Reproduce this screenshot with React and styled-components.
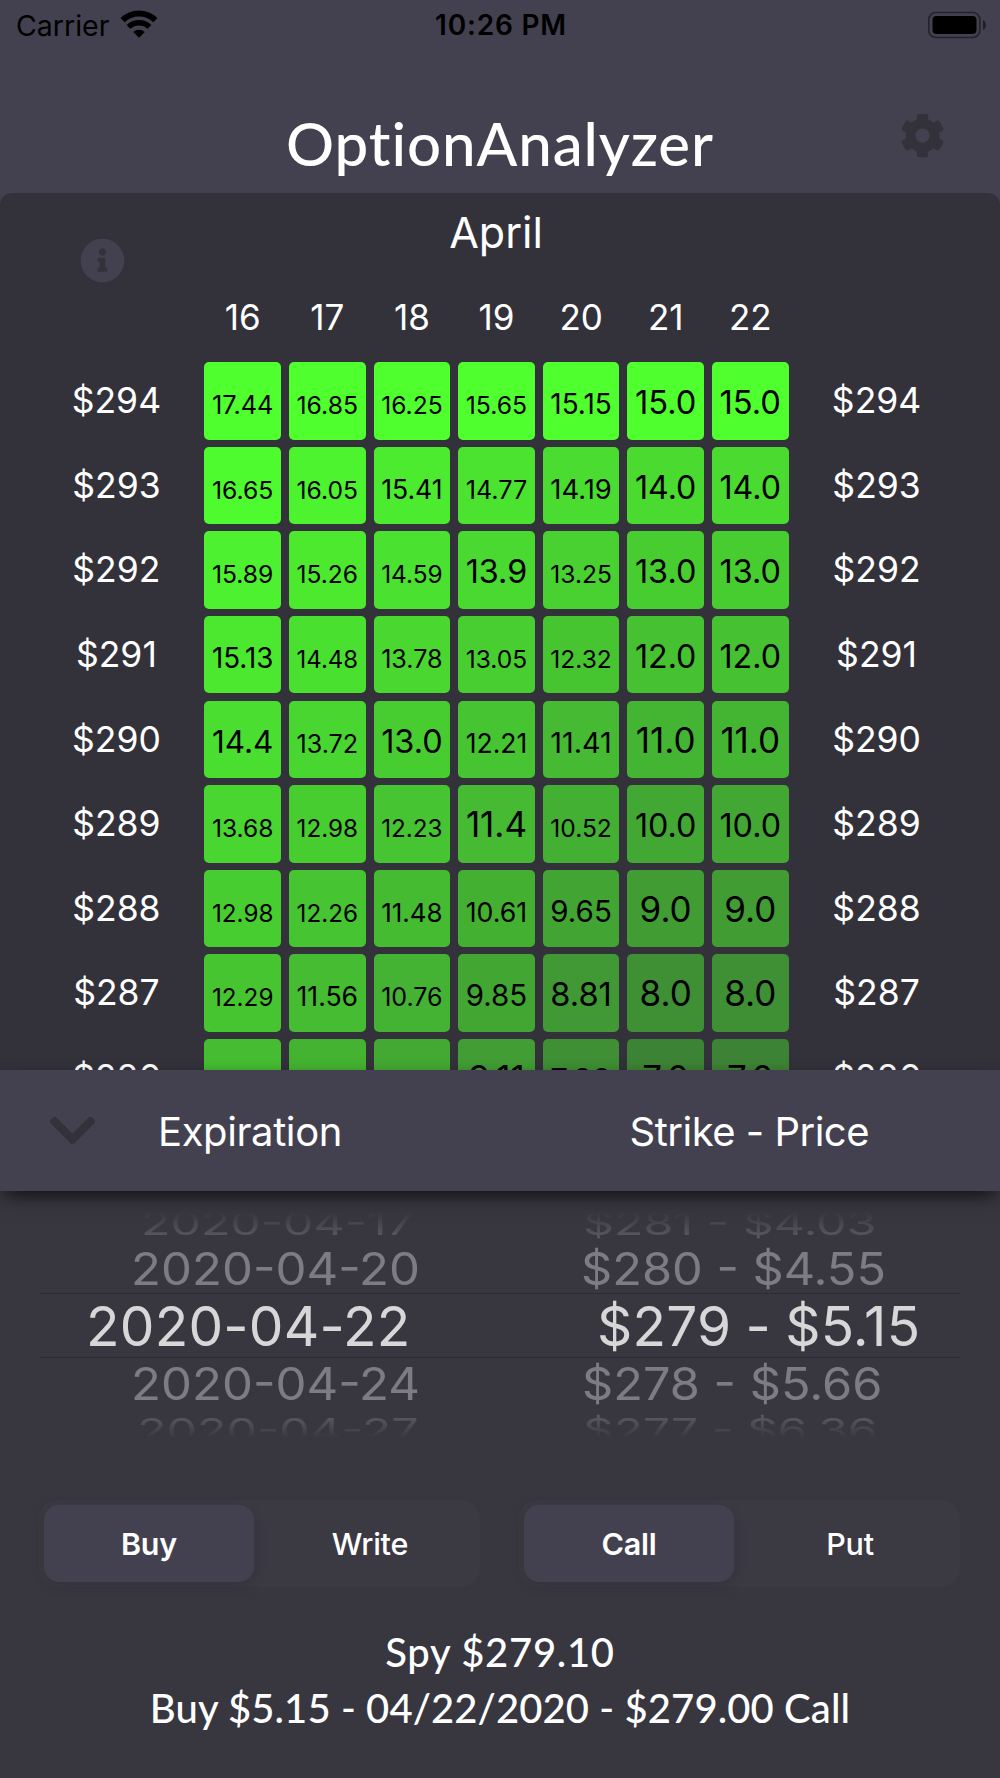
import React, { useState } from "react";
import styled, { createGlobalStyle } from "styled-components";
import { FaCog, FaInfoCircle, FaChevronDown } from "react-icons/fa";

// BEGIN STYLING

const GlobalStyle = createGlobalStyle`
  body {
    margin: 0;
    background: #38373f;
  }
  * {
    box-sizing: border-box;
  }
`
const SCScreen = styled.div`
  display: flex;
  flex-direction: column;
  width: 1000px;
  height: 1778px;
  overflow: hidden;
  background: #43414f;
  color: #fff;
  font-family: Inter, "Liberation Sans", sans-serif;
  white-space: nowrap;
`
const SCStatusBar = styled.div`
  display: grid;
  grid-template-columns: 1fr auto 1fr;
  align-items: center;
  height: 50px;
  padding: 0 14px 0 16px;
  color: #000;
  font-size: 28.5px;
`
const SCCarrier = styled.div`
  display: flex;
  align-items: center;
  gap: 11px;

  svg {
    margin-top: -3px;
  }
`
const SCClock = styled.div`
  font-size: 28px;
  font-weight: 600;
  letter-spacing: 0.8px;
`
const SCBattery = styled.svg`
  justify-self: end;
  margin-top: -1px;
`
const SCHeader = styled.header`
  display: grid;
  grid-template-columns: 1fr auto 1fr;
  height: 143px;
  padding: 0 55px;
`
const SCTitle = styled.h1`
  grid-column: 2;
  margin: 0;
  padding-top: 47px;
  font-family: Lato, sans-serif;
  font-size: 60px;
  font-weight: 500;
  line-height: 92px;
  letter-spacing: 0.9px;
`
const SCIconButton = styled.button`
  display: flex;
  padding: 0;
  border: 0;
  background: none;
  color: ${props => props.$color};
  font-size: ${props => props.$size}px;
  cursor: pointer;
`
const SCSettings = styled(SCIconButton)`
  justify-self: end;
  align-self: start;
  margin-top: 63px;
`
const SCChart = styled.section`
  height: 877px;
  overflow: hidden;
  border-radius: 12px 12px 0 0;
  background: #33323b;
`
const SCChartTop = styled.div`
  display: grid;
  grid-template-columns: 1fr auto 1fr;
  height: 98px;
  padding: 0 88px 0 80px;
`
const SCInfo = styled(SCIconButton)`
  align-self: start;
  margin-top: 45px;
`
const SCMonth = styled.h2`
  margin: 0;
  font-size: 43px;
  font-weight: 400;
  line-height: 78px;
`
const SCDays = styled.div`
  display: grid;
  grid-template-columns: repeat(7, 76.6px);
  column-gap: 8px;
  height: 71.3px;
  padding-left: 204.5px;
  font-size: 35px;
  line-height: 52px;
  text-align: center;
`
const SCRow = styled.div`
  display: grid;
  grid-template-columns: 176px repeat(7, 76.6px) 176px;
  column-gap: 8px;
  height: 77.3px;
  margin-bottom: 7.3px;
  padding-left: 20.4px;
  line-height: 78.8px;
`
const SCStrike = styled.div`
  padding-left: ${props => props.$left ? "16px" : "0"};
  padding-right: ${props => props.$left ? "0" : "16px"};
  font-size: 35.5px;
  text-align: center;
`
const SCCell = styled.div`
  height: 77.3px;
  border-radius: 5px;
  background: ${props => props.$color};
  color: #000;
  font-size: 35px;
  text-align: center;
`
const SCCellValue = styled.span`
  line-height: 1px;
`
const SCBand = styled.div`
  position: relative;
  display: flex;
  align-items: center;
  flex: none;
  height: 121px;
  padding: 0 131px 0 46px;
  background: #43414f;
  box-shadow: 0 10px 18px -5px rgba(0, 0, 0, 0.65), 0 0 10px rgba(0, 0, 0, 0.12);
  font-size: 40px;
`
const SCBandLabel = styled.div`
  margin-left: ${props => props.$first ? "59px" : "auto"};
  padding-top: 2px;
  letter-spacing: ${props => props.$first ? "-0.4px" : "-0.5px"};
`
const SCSheet = styled.section`
  flex: 1;
  background: #38373f;
`
const SCPicker = styled.div`
  display: grid;
  grid-template-columns: 1fr 1fr;
  height: 270px;
  margin: 0 39px;
  padding-top: 7px;
`
const SCWheel = styled.div`
  overflow: hidden;
  height: 240px;
  mask-image: linear-gradient(transparent 14px, #000 44px, #000 212px, transparent);
`
const SCOption = styled.div`
  display: flex;
  align-items: center;
  height: ${props => props.$height}px;
  padding-top: ${props => props.$drop || 0}px;
  padding-left: ${props => props.$left}px;
  border: solid #2d2c32;
  border-width: ${props => props.$selected ? "1.5px 0" : "0"};
  font-size: 55px;
  line-height: 1;
  letter-spacing: ${props => props.$selected ? "0.2px" : "0"};
  word-spacing: ${props => props.$selected ? "-1.5px" : "0"};
  color: rgba(255, 255, 255, ${props => props.$opacity});

  span {
    transform: scale(${props => props.$sx}, ${props => props.$sy});
    transform-origin: left center;
  }
`
const SCSegments = styled.div`
  display: flex;
  justify-content: space-between;
  margin: 39px 40px 0 39px;
`
const SCSegmented = styled.div`
  display: grid;
  grid-template-columns: 210px 220px;
  column-gap: 6px;
  width: 441px;
  height: 87px;
  padding: 5px 0 5px 5px;
  border-radius: 19px;
  background: #3b3a43;
`
const SCSegment = styled.button`
  padding: 0;
  border: 0;
  border-radius: 15px;
  background: ${props => props.$active ? "#43414f" : "transparent"};
  box-shadow: ${props => props.$active ? "0 4px 14px rgba(0, 0, 0, 0.12)" : "none"};
  color: #fff;
  font-family: inherit;
  font-size: 30.5px;
  font-weight: ${props => props.$active ? 600 : 500};
  letter-spacing: -0.2px;
  cursor: pointer;
`
const SCSummary = styled.div`
  margin-top: 38px;
  font-family: Lato, sans-serif;
  font-size: 40px;
  font-weight: 500;
  line-height: 55.5px;
  text-align: center;
`
const SCSummaryLine = styled.div`
  letter-spacing: ${props => props.$spacing}px;
`

// END STYLING

const days = [16, 17, 18, 19, 20, 21, 22];

const rows = [
  { strike: 294, values: ["17.44", "16.85", "16.25", "15.65", "15.15", "15.0", "15.0"] },
  { strike: 293, values: ["16.65", "16.05", "15.41", "14.77", "14.19", "14.0", "14.0"] },
  { strike: 292, values: ["15.89", "15.26", "14.59", "13.9", "13.25", "13.0", "13.0"] },
  { strike: 291, values: ["15.13", "14.48", "13.78", "13.05", "12.32", "12.0", "12.0"] },
  { strike: 290, values: ["14.4", "13.72", "13.0", "12.21", "11.41", "11.0", "11.0"] },
  { strike: 289, values: ["13.68", "12.98", "12.23", "11.4", "10.52", "10.0", "10.0"] },
  { strike: 288, values: ["12.98", "12.26", "11.48", "10.61", "9.65", "9.0", "9.0"] },
  { strike: 287, values: ["12.29", "11.56", "10.76", "9.85", "8.81", "8.0", "8.0"] },
  { strike: 286, values: ["11.62", "10.88", "10.06", "9.11", "7.99", "7.0", "7.0"] },
];

const expirations = [
  { label: "2020-04-17", height: 46, left: 102, sx: 0.878, sy: 0.6, drop: 5, opacity: 0.2 },
  { label: "2020-04-20", height: 49, left: 92, sx: 0.893, sy: 0.81, drop: 2, opacity: 0.35 },
  { label: "2020-04-22", height: 65, left: 47, sx: 1, sy: 1, drop: 2, opacity: 0.8, selected: true },
  { label: "2020-04-24", height: 52, left: 92, sx: 0.893, sy: 0.81, opacity: 0.35 },
  { label: "2020-04-27", height: 40, left: 98, sx: 0.88, sy: 0.6, opacity: 0.22 },
];

const prices = [
  { label: "$281 - $4.03", height: 46, left: 83, sx: 0.88, sy: 0.6, drop: 5, opacity: 0.2 },
  { label: "$280 - $4.55", height: 49, left: 81, sx: 0.885, sy: 0.81, drop: 2, opacity: 0.35 },
  { label: "$279 - $5.15", height: 65, left: 97, sx: 1, sy: 1, drop: 2, opacity: 0.8, selected: true },
  { label: "$278 - $5.66", height: 52, left: 82, sx: 0.885, sy: 0.81, opacity: 0.35 },
  { label: "$277 - $6.36", height: 40, left: 83, sx: 0.87, sy: 0.6, opacity: 0.22 },
];

const MAX_VALUE_SIZE = 35;
const VALUE_WIDTH = 61.5;
const context = document.createElement("canvas").getContext("2d");

// shrink a value until it fits inside its cell
const fitSize = text => {
  context.font = "100px Inter";
  return Math.min(MAX_VALUE_SIZE, VALUE_WIDTH / context.measureText(text).width * 100);
}

const cellColor = (value, top) => {
  const t = top ? 1 : Math.min(1, (value - 7) / 10);
  const mix = (a, b) => Math.round(a + (b - a) * t);
  return `rgb(${mix(61, 79)}, ${mix(131, 255)}, ${mix(53, 46)})`;
}

const Wifi = () => (
  <svg width="38" height="28" viewBox="0 0 38 28" fill="none" stroke="#000">
    <path d="M2.6 10.2 A23.3 23.3 0 0 1 35.4 10.2" strokeWidth="5.9" />
    <path d="M8.5 16.9 A15.2 15.2 0 0 1 29.5 16.9" strokeWidth="5.4" />
    <path d="M19 27.8 L13.2 22 A8.6 8.6 0 0 1 24.8 22 Z" fill="#000" stroke="none" />
  </svg>
)

const Battery = () => (
  <SCBattery width="59" height="28" viewBox="0 0 59 28">
    <rect x="1.8" y="1.5" width="51" height="25" rx="7" fill="none" stroke="#000" strokeOpacity="0.45" strokeWidth="1.7" />
    <rect x="5.5" y="5" width="44" height="18" rx="4" fill="#000" />
    <path d="M56 9 Q59 10.5 59 14 Q59 17.5 56 19 Z" fill="#000" fillOpacity="0.5" />
  </SCBattery>
)

const Wheel = ({ options }) => (
  <SCWheel>
    {options.map(o => (
      <SCOption
        key={o.label}
        $height={o.height}
        $left={o.left}
        $drop={o.drop}
        $sx={o.sx}
        $sy={o.sy}
        $opacity={o.opacity}
        $selected={o.selected}
      >
        <span>{o.label}</span>
      </SCOption>
    ))}
  </SCWheel>
)

const Segmented = ({ options, value, onChange }) => (
  <SCSegmented>
    {options.map(o => (
      <SCSegment key={o} $active={o === value} onClick={() => onChange(o)}>{o}</SCSegment>
    ))}
  </SCSegmented>
)

const App = () => {
  const [action, setAction] = useState("Buy");
  const [type, setType] = useState("Call");

  return (
    <SCScreen>
      <GlobalStyle />
      <SCStatusBar>
        <SCCarrier>Carrier <Wifi /></SCCarrier>
        <SCClock>10:26 PM</SCClock>
        <Battery />
      </SCStatusBar>
      <SCHeader>
        <SCTitle>OptionAnalyzer</SCTitle>
        <SCSettings $color="#33323b" $size={45}><FaCog /></SCSettings>
      </SCHeader>
      <SCChart>
        <SCChartTop>
          <SCInfo $color="#43414f" $size={45}><FaInfoCircle /></SCInfo>
          <SCMonth>April</SCMonth>
        </SCChartTop>
        <SCDays>
          {days.map(day => <div key={day}>{day}</div>)}
        </SCDays>
        {rows.map((row, r) => (
          <SCRow key={row.strike}>
            <SCStrike $left>${row.strike}</SCStrike>
            {row.values.map((value, i) => (
              <SCCell key={days[i]} $color={cellColor(Number(value), r === 0)}>
                <SCCellValue style={{ fontSize: fitSize(value) }}>{value}</SCCellValue>
              </SCCell>
            ))}
            <SCStrike>${row.strike}</SCStrike>
          </SCRow>
        ))}
      </SCChart>
      <SCBand>
        <SCIconButton $color="#33323b" $size={53}><FaChevronDown /></SCIconButton>
        <SCBandLabel $first>Expiration</SCBandLabel>
        <SCBandLabel>Strike - Price</SCBandLabel>
      </SCBand>
      <SCSheet>
        <SCPicker>
          <Wheel options={expirations} />
          <Wheel options={prices} />
        </SCPicker>
        <SCSegments>
          <Segmented options={["Buy", "Write"]} value={action} onChange={setAction} />
          <Segmented options={["Call", "Put"]} value={type} onChange={setType} />
        </SCSegments>
        <SCSummary>
          <SCSummaryLine $spacing={0.7}>Spy $279.10</SCSummaryLine>
          <SCSummaryLine $spacing={0.1}>{action} $5.15 - 04/22/2020 - $279.00 {type}</SCSummaryLine>
        </SCSummary>
      </SCSheet>
    </SCScreen>
  );
};

export default App;
